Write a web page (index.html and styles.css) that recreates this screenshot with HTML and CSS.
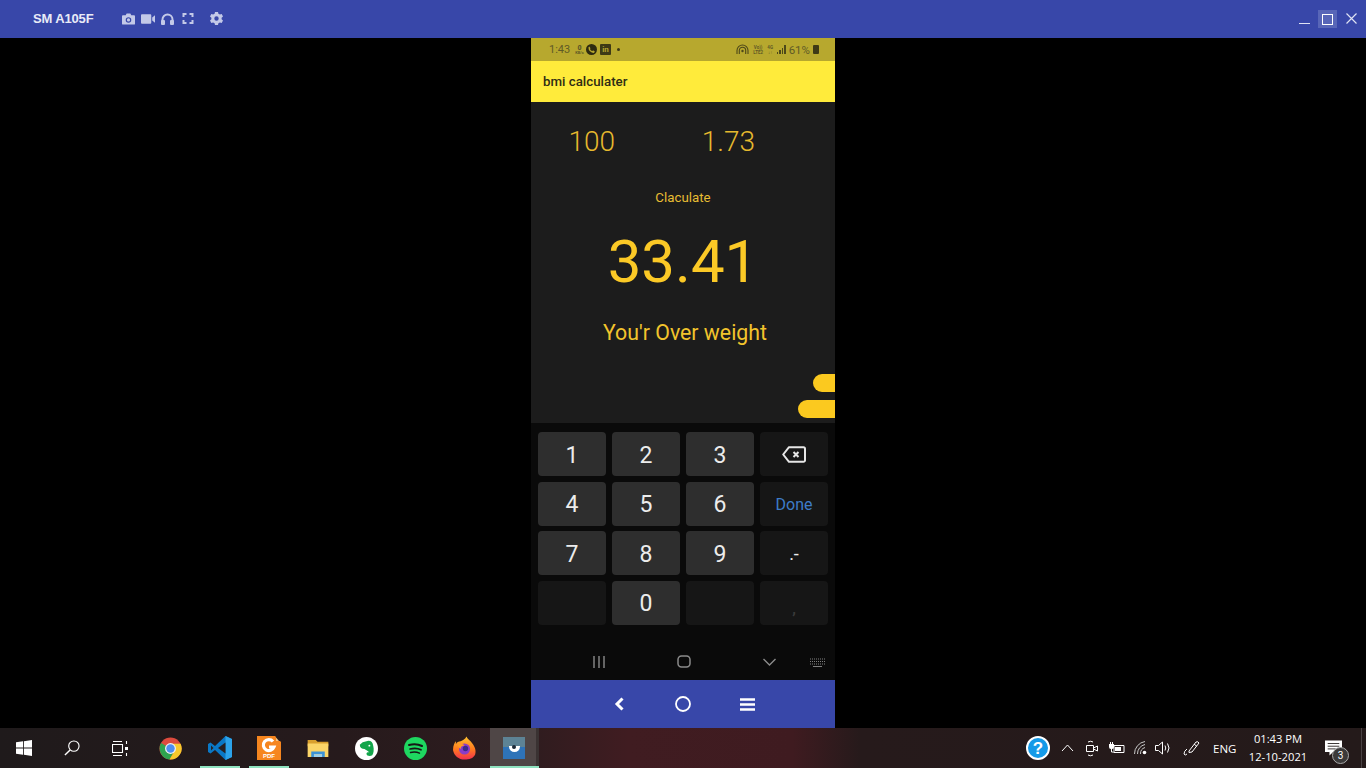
FILE: index.html
```html
<!DOCTYPE html>
<html lang="en">
<head>
<meta charset="utf-8">
<title>SM A105F</title>
<link rel="stylesheet" href="styles.css">
</head>
<body>
<div class="screen">
  <header class="titlebar">
    <div class="device">SM A105F</div>
    <div class="tools">
      <svg class="t t-cam" width="13" height="12" viewBox="0 0 14 12"><path fill="#c3c9e8" fill-rule="evenodd" d="M1 2h3l1-2h4l1 2h3a1 1 0 0 1 1 1v8a1 1 0 0 1-1 1H1a1 1 0 0 1-1-1V3a1 1 0 0 1 1-1zm6 2a3 3 0 1 0 0 6 3 3 0 0 0 0-6zm0 1.300a1.700 1.700 0 1 1 0 3.400 1.700 1.700 0 0 1 0-3.400z"/></svg>
      <svg class="t t-vid" width="14" height="10" viewBox="0 0 15 10"><path fill="#c3c9e8" d="M1 0h9a1 1 0 0 1 1 1v8a1 1 0 0 1-1 1H1a1 1 0 0 1-1-1V1a1 1 0 0 1 1-1zm11 3.500L15 1v8l-3-2.500z"/></svg>
      <svg class="t t-head" width="13" height="12" viewBox="0 0 13 12"><path fill="none" stroke="#c3c9e8" stroke-width="2" d="M1.500 8V6.500a5 5 0 0 1 10 0V8"/><rect x="0" y="7" width="4" height="5" rx="1" fill="#c3c9e8"/><rect x="9" y="7" width="4" height="5" rx="1" fill="#c3c9e8"/></svg>
      <svg class="t t-full" width="12" height="11" viewBox="0 0 11 11"><path fill="none" stroke="#c3c9e8" stroke-width="2" d="M1 4V1h3M7 1h3v3M10 7v3H7M4 10H1V7"/></svg>
      <svg class="t" width="13" height="13" viewBox="0 0 13 13"><path fill="#c3c9e8" fill-rule="evenodd" d="M5 0h3l.4 1.800 1.500.8L11.700 2l1.300 2.500-1.400 1.200v1.600L13 8.500 11.700 11l-1.800-.6-1.500.8L8 13H5l-.4-1.800-1.500-.8-1.800.6L0 8.500l1.400-1.200V5.700L0 4.500 1.300 2l1.800.6 1.500-.8zm1.500 4.300a2.200 2.200 0 1 0 0 4.400 2.200 2.200 0 0 0 0-4.400z"/></svg>
    </div>
    <div class="winctl">
      <span class="min"></span>
      <span class="maxwrap"><span class="max"></span></span>
      <svg class="close" width="11" height="11" viewBox="0 0 11 11"><path stroke="#dfe2f3" stroke-width="1.200" d="M.5.500l10 10M10.500.500l-10 10"/></svg>
    </div>
  </header>

  <main class="stage">
    <div class="phone">
      <div class="status">
        <div class="st-left">
          <span class="clock-s">1:43</span>
          <span class="kb"><b>0</b>KB/s</span>
          <svg width="11" height="11" viewBox="0 0 10 10"><circle cx="5" cy="5" r="5" fill="#2e2b10"/><path d="M3 2.300l1.100 1.600-.5.700a4 4 0 0 0 1.800 1.800L7 5.900l1.100 1.100-1 1.100a5 5 0 0 1-4.900-5z" fill="#b7a82e"/></svg>
          <span class="in">in</span>
          <span class="dot"></span>
        </div>
        <div class="st-right">
          <svg class="s-call" width="13" height="11" viewBox="0 0 13 11"><path fill="none" stroke="#4d481a" stroke-width="1.100" d="M1 10V6.500a5.500 5.500 0 0 1 11 0V10M3.300 10V6.500a3.200 3.200 0 0 1 6.400 0V10"/><circle cx="6.500" cy="7" r="1.200" fill="#4d481a"/></svg>
          <span class="tiny s-vol">Vo))<br>LTE2</span>
          <span class="tiny s-4g">4G<br>↓↑</span>
          <span class="bars"><i></i><i></i><i></i><i></i></span>
          <span class="pct">61%</span>
          <span class="batt"></span>
        </div>
      </div>
      <div class="appbar">bmi calculater</div>
      <div class="content">
        <div class="inputs">
          <span class="val">100</span>
          <span class="val">1.73</span>
        </div>
        <div class="calc">Claculate</div>
        <div class="bmi">33.41</div>
        <div class="verdict">You'r Over weight</div>
        <div class="handles">
          <span class="h1"></span>
          <span class="h2"></span>
        </div>
      </div>
      <div class="keyboard">
        <div class="keys">
          <div class="key">1</div>
          <div class="key">2</div>
          <div class="key">3</div>
          <div class="key dark"><svg width="24" height="17" viewBox="0 0 24 17"><path fill="none" stroke="#e6e6e6" stroke-width="2" stroke-linejoin="round" d="M7 1.200h14.500a1.500 1.500 0 0 1 1.500 1.500v11.600a1.500 1.500 0 0 1-1.500 1.500H7L1.200 8.500z"/><path stroke="#e6e6e6" stroke-width="2" d="M11.500 6l5 5M16.500 6l-5 5"/></svg></div>
          <div class="key">4</div>
          <div class="key">5</div>
          <div class="key">6</div>
          <div class="key dark done">Done</div>
          <div class="key">7</div>
          <div class="key">8</div>
          <div class="key">9</div>
          <div class="key dark sym">.-</div>
          <div class="key dark"></div>
          <div class="key">0</div>
          <div class="key dark"></div>
          <div class="key dark comma">,</div>
        </div>
        <div class="softnav">
          <svg class="sn1" width="12" height="12" viewBox="0 0 12 12"><path stroke="#8b8b8b" stroke-width="1.400" d="M1 0v12M6 0v12M11 0v12"/></svg>
          <svg class="sn2" width="14" height="13" viewBox="0 0 14 13"><rect x="1" y="1" width="12" height="11" rx="3.500" fill="none" stroke="#8b8b8b" stroke-width="1.500"/></svg>
          <svg class="sn3" width="13" height="8" viewBox="0 0 13 8"><path fill="none" stroke="#8b8b8b" stroke-width="1.400" d="M.5 1l6 6 6-6"/></svg>
          <svg class="sn4" width="15" height="9" viewBox="0 0 15 9"><path stroke="#808080" stroke-dasharray="1 1" d="M0 1h15M0 3.500h15M0 6h15"/><path stroke="#808080" d="M3 8.500h9"/></svg>
        </div>
      </div>
      <div class="hostnav">
        <svg class="hn-back" width="10" height="14" viewBox="0 0 10 14"><path fill="none" stroke="#fff" stroke-width="3" d="M8.500 1.500L3 7l5.500 5.500"/></svg>
        <svg class="hn-home" width="16" height="16" viewBox="0 0 16 16"><circle cx="8" cy="8" r="7" fill="none" stroke="#fff" stroke-width="1.800"/></svg>
        <svg width="15" height="13" viewBox="0 0 15 13"><path stroke="#fff" stroke-width="2.400" d="M0 1.500h15M0 6.500h15M0 11.500h15"/></svg>
      </div>
    </div>
  </main>

  <footer class="taskbar">
    <div class="tb-left">
      <div class="tb"><svg width="16" height="16" viewBox="0 0 17 17"><path fill="#fff" d="M0 2.500l7.500-1.100v6.600H0zM8.400 1.300L17 0v8H8.400zM0 9h7.500v6.600L0 14.500zM8.400 9H17v8l-8.600-1.300z"/></svg></div>
      <div class="tb"><svg width="16" height="16" viewBox="0 0 17 17"><circle cx="10.500" cy="6.500" r="5.500" fill="none" stroke="#fff" stroke-width="1.200"/><path stroke="#fff" stroke-width="1.500" d="M6.500 10.500L1 16"/></svg></div>
      <div class="tb"><svg width="16" height="15" viewBox="0 0 16 15"><path fill="none" stroke="#fff" stroke-width="1.100" d="M.5 3.500h10v8H.5zM1 .5h9M1 14.500h9M14.500 0v3M14.500 12v3"/><rect x="13" y="6" width="3" height="3" fill="#fff"/></svg></div>
      <div class="tb app chrome"><svg class="nudge" width="23" height="23" viewBox="0 0 24 24"><circle cx="12" cy="12" r="11.500" fill="#dd4b3e"/><path d="M12 12L2.200 6.300A11.500 11.500 0 0 0 11 23.500L17 13z" fill="#2ea44f"/><path d="M12 7h10.500A11.500 11.500 0 0 1 11 23.500L17 13z" fill="#f8c92c"/><circle cx="12" cy="12" r="5.700" fill="#f1f1f1"/><circle cx="12" cy="12" r="4.400" fill="#4e8ef0"/></svg></div>
      <div class="tb app open"><svg width="24" height="24" viewBox="0 0 24 24"><path fill="#0a78c6" d="M17.500 0L24 3v18l-6.500 3L7 14l-4.500 3.500L0 16V8l2.500-1.500L7 10z"/><path fill="#2ca3ea" d="M17.500 0L24 3v18l-6.500 3z"/><path fill="#262022" d="M17.500 6.500v11L10 12z"/><path fill="#262022" d="M3 9.500L5.500 12 3 14.500z"/></svg></div>
      <div class="tb app open"><svg width="24" height="24" viewBox="0 0 24 24"><path fill="#f6861f" d="M0 0h18l6 6v18H0z"/><path fill="#2b1f1d" d="M19 0l5 5h-5z"/><path fill="#f6c27f" d="M19 1.500l3 3.500h-3z"/><path fill="none" stroke="#fff" stroke-width="3.200" d="M16 5.500A5.500 5.500 0 1 0 17 11h-5"/><text x="12" y="22" class="pdf">PDF</text></svg></div>
      <div class="tb app"><svg width="22" height="18" viewBox="0 0 23 20"><path fill="#d9a02e" d="M0 1h9l2 2h12v5H0z"/><path fill="#fbd568" d="M0 5h23v15H0z"/><path fill="#3c93d8" d="M4 14h15v6h-3v-3H7v3H4z"/><path fill="#9bd0ee" d="M7 17h9v3H7z"/></svg></div>
      <div class="tb app"><svg class="nudge" width="23" height="23" viewBox="0 0 24 24"><circle cx="12" cy="12" r="12" fill="#fff"/><path fill="#12a54a" d="M8 5.500L14 4c3 0 4.500 2 5 5 1 4 .5 8-1 10-2 1.500-6 1-6-1.500 0-1.500 2-2 3-1-1-2.500-4-2.500-5-4-3 0-5-1.500-5-4.500z"/><circle cx="15" cy="9" r="1" fill="#fff"/></svg></div>
      <div class="tb app"><svg class="nudge" width="23" height="23" viewBox="0 0 23 23"><circle cx="11.500" cy="11.500" r="11.500" fill="#1ed760"/><path fill="none" stroke="#161616" stroke-linecap="round" stroke-width="2" d="M5 8c4-1 9-1 13 1"/><path fill="none" stroke="#161616" stroke-linecap="round" stroke-width="1.700" d="M6 12c3.500-1 8-.8 11 .8"/><path fill="none" stroke="#161616" stroke-linecap="round" stroke-width="1.400" d="M6.500 15.500c3-.7 6.500-.5 9 .7"/></svg></div>
      <div class="tb app"><svg class="nudge" width="23" height="24" viewBox="0 0 24 24"><defs><linearGradient id="ff" x1="0" y1="0" x2="0" y2="1"><stop offset="0" stop-color="#ffc22e"/><stop offset=".55" stop-color="#ff7a1f"/><stop offset="1" stop-color="#f2304f"/></linearGradient></defs><path fill="url(#ff)" d="M14 0c1 3 4 4 6 7 4 5 4 9 3 12-2 4-6 5-11 5-6 0-11-4-12-10C0 9 2 6 3 5v3c1-2 3-3 5-3 2-1 5-2 6-5z"/><circle cx="12" cy="13" r="5.800" fill="#8a3cc8"/><circle cx="13" cy="12.500" r="2.800" fill="#3b2a8c"/><path fill="#ff9a24" d="M5 8c3-1 6 0 7 1.500-2 0-4 1-4 3.500-1.500-1-2.800-3-3-5z"/></svg></div>
      <div class="tb app open active"><span class="scr"><span class="eye"></span></span></div>
    </div>
    <div class="tb-right">
      <svg class="help" width="24" height="24" viewBox="0 0 24 24"><circle cx="12" cy="12" r="11" fill="#149ae8" stroke="#fff" stroke-width="2"/><text x="12" y="18" class="q">?</text></svg>
      <svg class="chev" width="13" height="8" viewBox="0 0 13 8"><path fill="none" stroke="#fff" d="M1 7l5.500-6L12 7"/></svg>
      <svg class="tray-vid" width="12" height="17" viewBox="0 0 12 17"><path fill="none" stroke="#fff" d="M.5 5.500h7v6h-7zM7.500 8l4-2v5l-4-2M2 2q2.500-1.500 5 0M2 15q2.500 1.500 5 0"/></svg>
      <svg class="tray-plug" width="17" height="13" viewBox="0 0 17 13"><path fill="none" stroke="#fff" d="M6 3.500h10v7H6z"/><path fill="#fff" d="M7 5h6v4H7zM1 2h5v3q0 2-2 2H3q-2 0-2-2z"/><path stroke="#fff" d="M2.500 0v2M4.500 0v2M3.500 7v3H6"/></svg>
      <svg class="tray-wifi" width="14" height="14" viewBox="0 0 14 14"><path fill="none" stroke="#c8c8c8" d="M.5 13A12.500 12.500 0 0 1 11 .5M3.500 13A9.500 9.500 0 0 1 11 3.500M6.500 13A6.500 6.500 0 0 1 11 6.500"/><circle cx="10.500" cy="11.500" r="1.800" fill="#fff"/></svg>
      <svg class="tray-spk" width="16" height="14" viewBox="0 0 16 14"><path fill="none" stroke="#fff" d="M.5 4.500h3l4-3.500v12l-4-3.500h-3zM10 4.500q1.500 2.500 0 5M12.500 2.500q3 4.500 0 9"/></svg>
      <svg class="tray-pen" width="17" height="17" viewBox="0 0 17 17"><path fill="none" stroke="#fff" d="M6 11l7-9q2-1 3 1l-7 9-3 .5zM11 4l3 2.500M4 9q-3 2-3 5 1 2 3 0"/></svg>
      <span class="eng">ENG</span>
      <div class="clock"><span>01:43 PM</span><span>12-10-2021</span></div>
      <div class="notif">
        <svg width="17" height="16" viewBox="0 0 19 17"><path fill="#fff" d="M0 0h19v13H9l-4 4v-4H0z"/><path stroke="#26201f" d="M3 3.500h13M3 6.500h13M3 9.500h9"/></svg>
        <span class="badge">3</span>
      </div>
      <span class="showdesk"></span>
    </div>
  </footer>
</div>
</body>
</html>
```
FILE: styles.css
```css
* { box-sizing: border-box; }
html, body { margin: 0; height: 100%; background: #000; overflow: hidden; }
body { font-family: Roboto, "Liberation Sans", sans-serif; }
svg { display: block; flex: none; }
.screen { width: 1366px; height: 768px; display: flex; flex-direction: column; }

.titlebar { height: 38px; flex: none; background: #3847a9; display: flex; align-items: center; color: #e9ebf7; }
.device { margin-left: 33px; width: 89px; font: 700 13px/14px "Liberation Sans", sans-serif; letter-spacing: -0.15px; margin-top: -1px; }
.tools { display: flex; align-items: center; margin-top: -1px; }
.t-cam, .t-vid { margin-right: 6px; }
.t-head { margin-right: 8px; }
.t-full { margin-right: 16px; }
.winctl { margin-left: auto; display: flex; align-items: center; height: 38px; }
.min { width: 11px; height: 1px; background: #dfe2f3; margin-top: 9px; margin-right: 8px; }
.maxwrap { width: 19px; height: 18px; background: #5866b8; display: flex; align-items: center; justify-content: center; }
.max { width: 11px; height: 11px; border: 1px solid #fff; }
.close { margin: -1px 9px 0 9px; }

.stage { flex: 1; display: flex; justify-content: center; min-height: 0; }
.phone { width: 304px; display: flex; flex-direction: column; background: #1c1c1c; }

.status { height: 23px; flex: none; background: #b7a82e; display: flex; justify-content: space-between; align-items: center; padding: 0 16px 0 18px; color: #5f5a26; font-size: 11px; }
.st-left, .st-right { display: flex; align-items: center; }
.clock-s { width: 24px; }
.kb { width: 13px; font-size: 4px; line-height: 4px; text-align: center; font-weight: 700; display: flex; flex-direction: column; }
.kb b { font-size: 7px; line-height: 6px; }
.in { width: 11px; height: 11px; margin-left: 3px; background: #3e3a16; color: #b7a82e; font-size: 8px; line-height: 11px; text-align: center; font-weight: 700; border-radius: 1px; }
.dot { width: 3px; height: 3px; border-radius: 50%; background: #3e3a16; margin-left: 6px; }
.tiny { font-size: 4.500px; line-height: 5px; font-weight: 700; text-align: center; }
.s-vol { margin-left: 4px; width: 11px; }
.s-4g { margin-left: 3px; width: 7px; }
.bars { display: flex; align-items: flex-end; gap: 1px; height: 9px; margin-left: 3px; width: 9px; }
.bars i { width: 1.500px; background: #4d481a; }
.bars i:nth-child(1) { height: 2px; }
.bars i:nth-child(2) { height: 4px; }
.bars i:nth-child(3) { height: 6px; }
.bars i:nth-child(4) { height: 9px; }
.pct { margin-left: 3px; font-size: 11.500px; }
.batt { width: 6px; height: 9px; margin-left: 3px; background: #3e3a16; border-radius: 1px; }

.appbar { height: 41px; flex: none; background: #ffeb3b; color: #302d14; font-size: 13.300px; font-weight: 500; line-height: 41px; padding-left: 12px; }

.content { height: 321px; flex: none; background: #1c1c1c; position: relative; color: #f6c625; }
.inputs { display: flex; padding: 22px 0 0 37.500px; height: 82px; color: #e6b92e; }
.val { font-size: 28px; font-weight: 300; line-height: 36px; width: 133.500px; }
.calc { font-size: 13.300px; line-height: 16px; text-align: center; margin-top: 6px; color: #e8bd33; }
.bmi { font-size: 60px; line-height: 70px; text-align: center; margin-top: 21px; color: #fbc926; }
.verdict { font-size: 21.300px; line-height: 26px; text-align: center; margin-top: 23px; margin-left: 4px; color: #f2c42c; }
.handles { position: absolute; right: 0; top: 272px; display: flex; flex-direction: column; align-items: flex-end; gap: 8px; }
.handles span { display: block; height: 18px; background: #fbc91f; border-radius: 9px 0 0 9px; }
.h1 { width: 22px; }
.h2 { width: 37px; }

.keyboard { flex: 1; min-height: 0; background: #0a0a0a; display: flex; flex-direction: column; padding: 9px 7px 0; }
.keys { display: grid; grid-template-columns: repeat(4, 68px); grid-auto-rows: 44px; column-gap: 6px; row-gap: 5.670px; }
.key { background: #2e2e2e; border-radius: 4px; color: #ececec; font-size: 23px; font-weight: 400; padding-top: 2px; display: flex; align-items: center; justify-content: center; }
.key.dark { background: #161616; padding-top: 0; }
.key.done { color: #3e7cc8; font-size: 16px; font-weight: 400; padding-top: 1px; }
.key.sym { font-size: 18px; font-weight: 400; padding-top: 1px; }
.key.comma { color: #3a3a3a; font-size: 15px; font-weight: 700; padding-top: 12px; }

.softnav { position: relative; flex: 1; }
.softnav svg { position: absolute; }
.sn1 { left: 55px; top: 31px; }
.sn2 { left: 139px; top: 30px; }
.sn3 { left: 225px; top: 33px; }
.sn4 { left: 272px; top: 33px; }

.hostnav { height: 48px; flex: none; background: #3847a9; display: flex; align-items: center; justify-content: center; padding-left: 3px; }
.hn-back { margin-right: 51px; }
.hn-home { margin-right: 49px; }

.taskbar { height: 40px; flex: none; display: flex; justify-content: space-between; color: #fff; background: linear-gradient(90deg, #1f1a1b 0, #261a1c 25%, #2f1c1f 39%, #401c21 46%, #3f1b20 58%, #261a1b 63%, #241a1a 100%); }
.tb-left { display: flex; }
.tb { width: 48px; height: 40px; display: flex; align-items: center; justify-content: center; position: relative; }
.tb.app { width: 49px; }
.tb.chrome { margin-left: 2.500px; }
.nudge { margin-right: 2px; }
.tb.open::after { content: ""; position: absolute; left: 4.500px; right: 4.500px; bottom: 0; height: 2px; background: #8fe3c0; }
.tb.active { background: #4f4646; border-right: 3px solid #3a3232; padding-left: 3px; }
.tb.active::after { left: 0; right: -3px; }
.scr { width: 22px; height: 22px; display: block; position: relative; background: linear-gradient(#5d8395 0 47%, #2e73b8 47%); overflow: hidden; }
.eye { position: absolute; left: 5.500px; top: 9px; width: 11px; height: 6px; background: #fff; border-radius: 0 0 6px 6px; }
.eye::after { content: ""; position: absolute; left: 3.500px; top: -1px; width: 4px; height: 4px; border-radius: 50%; background: #1c2a38; }
.pdf { font: 700 6px "Liberation Sans", sans-serif; fill: #fff; text-anchor: middle; }
.q { font: 700 17px "Liberation Sans", sans-serif; fill: #fff; text-anchor: middle; }

.tb-right { display: flex; align-items: center; padding-right: 4px; }
.help { margin-right: 11px; }
.chev { margin-right: 12px; }
.tray-vid { margin-right: 10px; }
.tray-plug { margin-right: 9px; }
.tray-wifi { margin-right: 7px; }
.tray-spk { margin-right: 12px; }
.tray-pen { margin-right: 13px; }
.eng { font: 11.500px "Open Sans", Roboto, sans-serif; width: 36px; }
.clock { width: 58px; display: flex; flex-direction: column; align-items: center; font: 11.200px/18px "Open Sans", Roboto, sans-serif; margin-right: 18px; white-space: nowrap; }
.notif { position: relative; width: 24px; height: 40px; padding-top: 12px; }
.badge { position: absolute; left: 7px; top: 19px; width: 17px; height: 17px; border-radius: 50%; border: 1px solid #aaa; background: #3c3a3a; font-size: 10px; line-height: 15px; text-align: center; color: #fff; }
.showdesk { width: 1px; height: 40px; background: #4a4243; margin-left: 12px; }
```
